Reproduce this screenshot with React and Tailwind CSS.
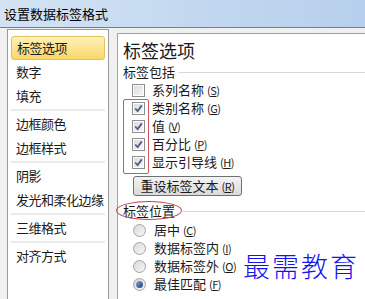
import React from "react";

const FONT = { fontFamily: '"Noto Sans CJK SC", "Noto Sans", sans-serif' };

function Key({ k }) {
  return (
    <span className="ml-[3px] text-[11px] tracking-[-0.5px]">
      (<span className="underline underline-offset-1">{k}</span>)
    </span>
  );
}

function Checkbox({ checked }) {
  return (
    <div className="w-[13px] h-[13px] border border-[#8e8f8f] bg-white p-px shrink-0">
      <div className="w-full h-full bg-gradient-to-br from-[#dcdcdc] to-[#f6f6f6] flex items-center justify-center">
        {checked && (
          <svg width="9" height="9" viewBox="0 0 9 9">
            <path d="M1.2 4.5 L3.6 7 L7.8 1.4" fill="none" stroke="#4c5e88" strokeWidth="1.8" />
          </svg>
        )}
      </div>
    </div>
  );
}

function Radio({ checked }) {
  return (
    <div className="w-[13px] h-[13px] rounded-full border border-[#a3a3a3] bg-gradient-to-br from-[#d9d9d9] to-[#f7f7f7] flex items-center justify-center shrink-0">
      {checked && (
        <div className="w-[7px] h-[7px] rounded-full bg-gradient-to-br from-[#8aa5d6] to-[#1f3e7c]" />
      )}
    </div>
  );
}

const items = [
  ["标签选项", true],
  ["数字"],
  ["填充", false, true],
  ["边框颜色"],
  ["边框样式", false, true],
  ["阴影"],
  ["发光和柔化边缘", false, true],
  ["三维格式", false, true],
  ["对齐方式"],
];

export default function App() {
  return (
    <div style={FONT} className="relative w-[365px] h-[299px] overflow-hidden bg-[#f0f0f0] text-[#1a1a1a]">
      <div className="h-[27px] bg-gradient-to-r from-[#d3e3f4] via-[#c4d9f0] to-[#b6cfec] flex items-center pl-[4px] text-[13px] text-black">
        设置数据标签格式
      </div>
      <div className="h-px bg-[#6d7f9b]" />
      <div className="flex items-start">
        <div className="ml-[7px] mt-px w-[102px] h-[290px] border border-[#9a9a9a] bg-white px-[3px] pt-[6px] shrink-0">
          {items.map(([t, sel, sep]) => (
            <React.Fragment key={t}>
              <div
                className={
                  "h-[24px] flex items-center pl-[5px] text-[13px] tracking-[-0.5px] whitespace-nowrap " +
                  (sel
                    ? "rounded-[3px] border border-[#e2c160] bg-gradient-to-b from-[#fef1b7] to-[#fbd767]"
                    : "")
                }
              >
                {t}
              </div>
              {sep && <div className="h-[3px] border-t-2 border-[#ececec] mt-px" />}
            </React.Fragment>
          ))}
        </div>
        <div className="ml-[8px] mt-[5px] flex-1 h-[290px] border-l border-t border-[#a2a2a2] bg-white">
          <div className="pl-[5px] mt-[5px] text-[18px] leading-[22px]">标签选项</div>
          <div className="pl-[5px] mt-[3px] flex items-center text-[13px] leading-[16px]">
            <span>标签包括</span>
            <div className="flex-1 h-px bg-[#d8d8d8] ml-[4px]" />
          </div>
          <div className="mt-px pl-[14px]">
            {[
              ["系列名称", "S", false],
              ["类别名称", "G", true],
              ["值", "V", true],
              ["百分比", "P", true],
              ["显示引导线", "H", true],
            ].map(([t, k, c]) => (
              <div key={t} className="h-[18px] flex items-center text-[13px]">
                <Checkbox checked={c} />
                <span className="ml-[7px]">
                  {t}
                  <Key k={k} />
                </span>
              </div>
            ))}
          </div>
          <div className="ml-[15px] mt-[5px] h-[20px] w-[109px] rounded-[3px] border border-[#707070] bg-gradient-to-b from-[#f4f4f4] to-[#dadada] flex items-center justify-center text-[13px]">
            重设标签文本<Key k="R" />
          </div>
          <div className="pl-[5px] mt-[7px] flex items-center text-[13px] leading-[16px]">
            <span>标签位置</span>
            <div className="flex-1 h-px bg-[#d8d8d8] ml-[8px]" />
          </div>
          <div className="mt-[2px] pl-[15px]">
            {[
              ["居中", "C", false],
              ["数据标签内", "I", false],
              ["数据标签外", "O", false],
              ["最佳匹配", "F", true],
            ].map(([t, k, c]) => (
              <div key={t} className="h-[18px] flex items-center text-[13px]">
                <Radio checked={c} />
                <span className="ml-[8px]">
                  {t}
                  <Key k={k} />
                </span>
              </div>
            ))}
          </div>
        </div>
      </div>
      <div className="absolute left-[123px] top-[99px] w-[26px] h-[75px] border-[1.5px] border-[#d0585d] rounded-[2px]" />
      <div className="absolute left-[116px] top-[201px] w-[66px] h-[19px] border-[1.5px] border-[#c0484d] rounded-[50%]" />
      <div className="absolute left-[243px] top-[250px] text-[27px] leading-[32px] tracking-[2px] font-light text-[#1414ee]">
        最需教育
      </div>
    </div>
  );
}
